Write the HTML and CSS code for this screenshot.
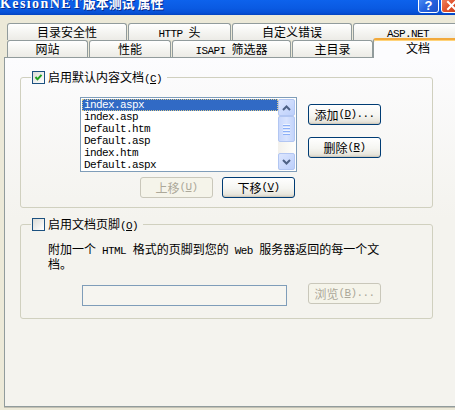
FILE: index.html
```html
<!DOCTYPE html>
<html lang="zh-CN">
<head>
<meta charset="utf-8">
<title>KesionNET版本测试 属性</title>
<link rel="stylesheet" href="styles.css">
</head>
<body>
<div class="window">
  <div class="titlebar">
    <div class="title"><span class="tm">KesionNET</span>版本测试 属性</div>
    <div class="caption-btns">
      <span class="cap help">?</span>
      <span class="cap close">
        <svg width="11" height="11" viewBox="0 0 11 11"><path d="M2 2 L9 9 M9 2 L2 9" stroke="#fff" stroke-width="2" stroke-linecap="square"/></svg>
      </span>
    </div>
  </div>

  <div class="tabs">
    <div class="tabrow">
      <div class="tab w120">目录安全性</div>
      <div class="tab w103"><span class="m">HTTP </span>头</div>
      <div class="tab w120">自定义错误</div>
      <div class="tab w110"><span class="m">ASP.NET</span></div>
    </div>
    <div class="tabrow">
      <div class="tab w81">网站</div>
      <div class="tab w82">性能</div>
      <div class="tab w119"><span class="m">ISAPI </span>筛选器</div>
      <div class="tab w81">主目录</div>
      <div class="tab active">文档</div>
    </div>
  </div>

  <div class="panel">
    <fieldset class="group g1">
      <legend class="legend">
        <span class="cb">
          <svg width="11" height="11" viewBox="0 0 11 11"><polyline points="2.5,5 4.5,7.3 8.5,2.8" fill="none" stroke="#21A121" stroke-width="2"/></svg>
        </span>
        <span class="lbl">启用默认内容文档<span class="m">(<u>C</u>)</span></span>
      </legend>
      <div class="g1-body">
        <div class="list-row">
          <div class="listbox">
            <div class="items">
              <div class="item sel">index.aspx</div>
              <div class="item">index.asp</div>
              <div class="item">Default.htm</div>
              <div class="item">Default.asp</div>
              <div class="item">index.htm</div>
              <div class="item">Default.aspx</div>
            </div>
            <div class="scrollbar">
              <div class="sb-btn">
                <svg width="9" height="6" viewBox="0 0 9 6"><polyline points="1,5 4.5,1.5 8,5" fill="none" stroke="#4D6185" stroke-width="2"/></svg>
              </div>
              <div class="sb-thumb">
                <span class="grip"></span><span class="grip"></span><span class="grip"></span><span class="grip"></span>
              </div>
              <div class="sb-track"></div>
              <div class="sb-btn">
                <svg width="9" height="6" viewBox="0 0 9 6"><polyline points="1,1 4.5,4.5 8,1" fill="none" stroke="#4D6185" stroke-width="2"/></svg>
              </div>
            </div>
          </div>
          <div class="side-btns">
            <button class="btn">添加<span class="m">(<u>D</u>)...</span></button>
            <button class="btn">删除<span class="m">(<u>R</u>)</span></button>
          </div>
        </div>
        <div class="move-row">
          <button class="btn" disabled>上移<span class="m">(<u>U</u>)</span></button>
          <button class="btn">下移<span class="m">(<u>V</u>)</span></button>
        </div>
      </div>
    </fieldset>

    <fieldset class="group g2">
      <legend class="legend">
        <span class="cb"></span>
        <span class="lbl">启用文档页脚<span class="m">(<u>O</u>)</span></span>
      </legend>
      <div class="g2-body">
        <p class="desc">附加一个<span class="m w">HTML</span>格式的页脚到您的<span class="m w">Web</span>服务器返回的每一个文档。</p>
        <div class="file-row">
          <div class="textbox"></div>
          <button class="btn" disabled>浏览<span class="m">(<u>B</u>)...</span></button>
        </div>
      </div>
    </fieldset>
  </div>
</div>
</body>
</html>
```

FILE: styles.css
```css
* { box-sizing: border-box; }

html, body {
  margin: 0;
  padding: 0;
  overflow: hidden;
}

body {
  width: 455px;
  height: 410px;
  background: #ECE9D8;
  font-family: "Noto Sans CJK SC", sans-serif;
  font-size: 12px;
  color: #000;
}

.window {
  width: 462px;
  height: 410px;
}

.m {
  font-family: "Liberation Mono", monospace;
  font-size: 11px;
  letter-spacing: -0.6px;
  line-height: 1;
}

.m.w {
  margin: 0 6.6px 0 6px;
}

/* title bar */
.titlebar {
  height: 15px;
  display: flex;
  align-items: flex-start;
  overflow: hidden;
  background: linear-gradient(#0D62EC, #0A5AE2 55%, #0650D6 85%, #0444BE);
}

.title {
  color: #fff;
  font-weight: bold;
  font-size: 13px;
  line-height: 13px;
  margin-top: -4px;
  white-space: nowrap;
  text-shadow: 1px 1px #0A2A8A;
}

.tm {
  font-family: "Liberation Serif", serif;
  font-size: 14px;
  letter-spacing: 1.4px;
}

.caption-btns {
  margin-left: auto;
  margin-top: -8px;
  display: flex;
  gap: 2px;
}

.cap {
  width: 21px;
  height: 21px;
  border: 1px solid #fff;
  border-radius: 3px;
  display: flex;
  align-items: center;
  justify-content: center;
  color: #fff;
  font: bold 13px "Liberation Sans", sans-serif;
  padding-top: 6px;
}

.help {
  background: linear-gradient(135deg, #5A9CFA, #2663E0 55%, #1B50C8);
}

.close {
  background: linear-gradient(135deg, #F39A7A, #E0502A 55%, #C53C16);
}

/* tabs */
.tabs {
  padding: 8px 0 0 7px;
}

.tabrow {
  display: flex;
  gap: 1px;
  height: 17px;
}

.tab {
  flex: none;
  height: 17px;
  line-height: 15px;
  text-align: center;
  white-space: nowrap;
  border: 1px solid #919B9C;
  border-bottom: none;
  border-radius: 3px 3px 0 0;
  background: linear-gradient(#FFFFFF, #F6F6F3 45%, #ECEBE6);
}

.w81 { width: 81px; }
.w82 { width: 82px; }
.w103 { width: 103px; }
.w110 { width: 110px; }
.w119 { width: 119px; }
.w120 { width: 120px; }

.tab.active {
  width: 90px;
  height: 20px;
  margin-top: -2px;
  margin-left: -1px;
  line-height: 15px;
  border-top: 2px solid #F2A93B;
  background: #FCFCFE;
  box-shadow: inset 0 1px #FFD37A;
  z-index: 1;
}

/* panel */
.panel {
  height: 350px;
  margin-left: 4px;
  border: 1px solid #919B9C;
  border-right: none;
  background: linear-gradient(#FCFCFE, #F4F3EE 160px);
  padding: 13px 0 0 15px;
  box-shadow: 0 1px #C2C0B3;
}

.group {
  width: 413px;
  margin: 0;
  padding: 0;
  border: 1px solid #D0D0BF;
  border-radius: 3px;
}

.g2 {
  margin-top: 10px;
}

.legend {
  display: flex;
  align-items: center;
  gap: 3px;
  margin-left: 10px;
  padding: 0 5px 0 1px;
  height: 13px;
  line-height: 13px;
}

.cb {
  flex: none;
  width: 13px;
  height: 13px;
  border: 1px solid #1C5180;
  background: linear-gradient(135deg, #DCDCD7, #FFFFFF);
  display: flex;
  align-items: center;
  justify-content: center;
}

.lbl {
  white-space: nowrap;
}

u {
  text-decoration: underline;
  text-underline-offset: 1px;
}

/* group 1 */
.g1-body {
  padding: 13px 0 9px 59px;
}

.list-row {
  display: flex;
  align-items: flex-start;
}

.listbox {
  width: 217px;
  height: 75px;
  border: 1px solid #7F9DB9;
  background: #fff;
  padding: 1px;
  display: flex;
}

.items {
  flex: 1;
  font-family: "Liberation Mono", monospace;
  font-size: 11px;
  letter-spacing: -0.6px;
}

.item {
  height: 12px;
  line-height: 12px;
  padding-left: 2px;
  white-space: nowrap;
}

.item.sel {
  background: #316AC5;
  color: #fff;
  outline: 1px dotted #D9C98A;
  outline-offset: -1px;
}

.scrollbar {
  width: 17px;
  display: flex;
  flex-direction: column;
  background: linear-gradient(to right, #F3F1EC, #FEFEFB);
}

.sb-btn {
  height: 17px;
  border: 1px solid #B2C6F2;
  border-radius: 2px;
  background: linear-gradient(135deg, #DCE6FE, #BCCFFB);
  display: flex;
  align-items: center;
  justify-content: center;
}

.sb-thumb {
  height: 26px;
  border: 1px solid #B2C6F2;
  border-radius: 2px;
  background: linear-gradient(to right, #C9D8FC, #D8E3FE 50%, #C3D4FB);
  display: flex;
  flex-direction: column;
  align-items: center;
  justify-content: center;
  gap: 1px;
}

.grip {
  width: 7px;
  height: 1px;
  background: #EEF4FE;
  box-shadow: 0 1px #8CB0F8;
  margin-bottom: 1px;
}

.sb-track {
  flex: 1;
}

.side-btns {
  display: flex;
  flex-direction: column;
  gap: 12px;
  margin-left: 11px;
  padding-top: 7px;
}

.btn {
  width: 73px;
  height: 21px;
  padding: 0;
  border: 1px solid #003C74;
  border-radius: 3px;
  background: linear-gradient(#FFFFFF, #F5F5F1 55%, #E9E7DE 85%, #D6D0C5);
  box-shadow: inset 0 -1px #D0CBBE;
  font-family: "Noto Sans CJK SC", sans-serif;
  font-size: 12px;
  line-height: 13px;
  color: #000;
  display: flex;
  align-items: center;
  justify-content: center;
  white-space: nowrap;
}

.btn:disabled {
  border-color: #C9C7BA;
  background: #F5F4EA;
  box-shadow: none;
  color: #ACA899;
}

.move-row {
  display: flex;
  gap: 9px;
  margin-top: 5px;
  padding-left: 60px;
}

/* group 2 */
.g2-body {
  padding: 11px 0 12px 27px;
}

.desc {
  margin: 0;
  width: 336px;
  line-height: 13px;
}

.file-row {
  display: flex;
  align-items: flex-start;
  margin-top: 13px;
  padding-left: 34px;
}

.textbox {
  width: 205px;
  height: 21px;
  margin-top: 2px;
  border: 1px solid #7F9DB9;
  background: #F6F5F0;
}

.file-row .btn {
  margin-left: 21px;
}
```
